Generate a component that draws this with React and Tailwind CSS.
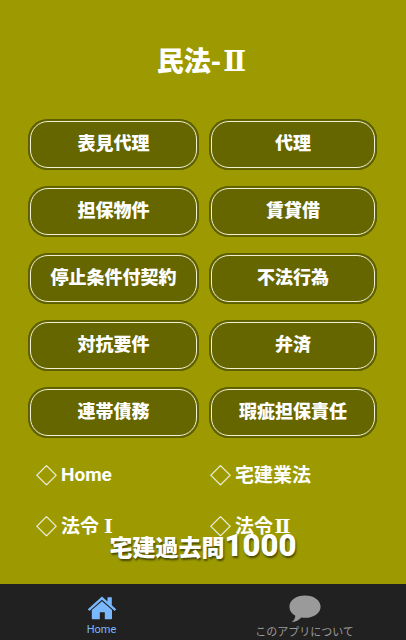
import React from "react";

const topics = [
  "表見代理",
  "代理",
  "担保物件",
  "賃貸借",
  "停止条件付契約",
  "不法行為",
  "対抗要件",
  "弁済",
  "連帯債務",
  "瑕疵担保責任",
];

// Roman numerals take a full-width cell, with serifs
const Numeral = ({ children }) => (
  <span className="inline-block w-[1em] text-center font-['DejaVu_Serif',serif] leading-none">
    {children}
  </span>
);

const TopicButton = ({ label }) => (
  <button
    type="button"
    className="h-[51px] rounded-[20px] bg-[#656600] p-[2px] shadow-[inset_0_0_0_1px_#5d5e00]"
  >
    <span className="flex h-full items-center justify-center rounded-[18px] border border-[#f0f0d0] pb-[6px] text-[18px] leading-6 font-black whitespace-nowrap">
      {label}
    </span>
  </button>
);

const NavLink = ({ children }) => (
  <a href="#" className="flex items-center gap-1 text-[19px] leading-[30px]">
    <span className="text-[21px] font-medium">◇</span>
    <span>{children}</span>
  </a>
);

const HomeIcon = () => (
  <svg viewBox="0 0 30 24" className="h-6 w-[30px]" fill="currentColor" aria-hidden="true">
    <path d="M15 0.5 20.5 5.4V1.3h4.3v8l4.4 4-1.5 1.7L15 3.8 2.3 15 .8 13.3Z" />
    <path d="M15 5.2 25 14v8.4q0 .8-.8.8h-6.4v-7h-5v7H5.6q-.8 0-.8-.8V14Z" />
  </svg>
);

const BubbleIcon = () => (
  <svg viewBox="0 0 32 28" className="h-7 w-8" fill="currentColor" aria-hidden="true">
    <path d="M16 .5C24.8.5 31.6 5.3 31.6 11.7S24.8 22.8 16 22.8q-2 0-3.7-.3C10 25 6.5 27 2.6 27.2c2.2-1.6 3.6-3.6 3.7-6.5C2.7 18.6.4 15.5.4 11.7.4 5.3 7.2.5 16 .5Z" />
  </svg>
);

export default function App() {
  return (
    <div className="flex min-h-screen flex-col bg-[#9c9a00] font-['Noto_Sans_CJK_JP','Noto_Sans',sans-serif] text-white">
      <main className="relative flex-1 pr-[29px] pl-7 font-bold">
        <h1 className="pt-10 text-center text-[27px] leading-10 font-black">
          民法-<Numeral>Ⅱ</Numeral>
        </h1>

        <div className="mt-[39px] grid grid-cols-[171fr_168fr] gap-x-[10px] gap-y-4">
          {topics.map((label) => (
            <TopicButton key={label} label={label} />
          ))}
        </div>

        <nav className="mt-5 grid grid-cols-[171fr_168fr] gap-x-1 gap-y-5 pl-2">
          <NavLink>
            <span className="font-['Roboto',sans-serif]">Home</span>
          </NavLink>
          <NavLink>宅建業法</NavLink>
          <NavLink>
            法令<Numeral>Ⅰ</Numeral>
          </NavLink>
          <NavLink>
            法令<Numeral>Ⅱ</Numeral>
          </NavLink>
        </nav>

        {/* App name floats over the last row of links */}
        <p className="absolute inset-x-0 bottom-[22px] text-center text-[23px] leading-8 font-black [text-shadow:1px_2px_2px_#4a4900]">
          宅建過去問
          <span className="font-['Roboto',sans-serif] text-[31px]">1000</span>
        </p>
      </main>

      <footer className="grid h-14 grid-cols-2 bg-[#212121] text-[11px] leading-4">
        <button type="button" className="flex flex-col items-center pt-3 text-[#79b8ff]">
          <HomeIcon />
          <span className="mt-[2px] font-['Roboto',sans-serif]">Home</span>
        </button>
        <button type="button" className="flex flex-col items-center pt-[11px] text-[#9a9a9a]">
          <BubbleIcon />
          <span>このアプリについて</span>
        </button>
      </footer>
    </div>
  );
}
